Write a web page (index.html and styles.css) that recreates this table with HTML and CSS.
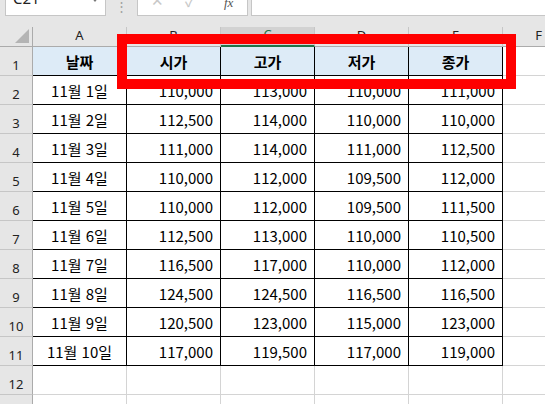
FILE: index.html
```html
<!DOCTYPE html>
<html lang="ko">
<head>
<meta charset="utf-8">
<link rel="stylesheet" href="styles.css">
</head>
<body>
<div class="page">
  <div class="fbar">
    <div class="namebox"><span class="nb-text">C21</span><span class="nb-arrow"></span></div>
    <div class="dots">⋮</div>
    <div class="btns"><span class="b-x">✕</span><span class="b-ok">✓</span><span class="b-fx">fx</span></div>
    <div class="finput"></div>
  </div>
  <div class="sheet">
    <div class="corner"><span class="tri"></span></div>
    <div class="ch">A</div><div class="ch">B</div><div class="ch sel">C</div><div class="ch">D</div><div class="ch">E</div><div class="ch">F</div>

    <div class="rh">1</div>
    <div class="c t hd">날짜</div><div class="c t hd">시가</div><div class="c t hd">고가</div><div class="c t hd">저가</div><div class="c t hd">종가</div><div class="c"></div>

    <div class="rh">2</div>
    <div class="c t ct">11월 1일</div><div class="c t n">110,000</div><div class="c t n">113,000</div><div class="c t n">110,000</div><div class="c t n">111,000</div><div class="c"></div>

    <div class="rh">3</div>
    <div class="c t ct">11월 2일</div><div class="c t n">112,500</div><div class="c t n">114,000</div><div class="c t n">110,000</div><div class="c t n">110,000</div><div class="c"></div>

    <div class="rh">4</div>
    <div class="c t ct">11월 3일</div><div class="c t n">111,000</div><div class="c t n">114,000</div><div class="c t n">111,000</div><div class="c t n">112,500</div><div class="c"></div>

    <div class="rh">5</div>
    <div class="c t ct">11월 4일</div><div class="c t n">110,000</div><div class="c t n">112,000</div><div class="c t n">109,500</div><div class="c t n">112,000</div><div class="c"></div>

    <div class="rh">6</div>
    <div class="c t ct">11월 5일</div><div class="c t n">110,000</div><div class="c t n">112,000</div><div class="c t n">109,500</div><div class="c t n">111,500</div><div class="c"></div>

    <div class="rh">7</div>
    <div class="c t ct">11월 6일</div><div class="c t n">112,500</div><div class="c t n">113,000</div><div class="c t n">110,000</div><div class="c t n">110,500</div><div class="c"></div>

    <div class="rh">8</div>
    <div class="c t ct">11월 7일</div><div class="c t n">116,500</div><div class="c t n">117,000</div><div class="c t n">110,000</div><div class="c t n">112,000</div><div class="c"></div>

    <div class="rh">9</div>
    <div class="c t ct">11월 8일</div><div class="c t n">124,500</div><div class="c t n">124,500</div><div class="c t n">116,500</div><div class="c t n">116,500</div><div class="c"></div>

    <div class="rh">10</div>
    <div class="c t ct">11월 9일</div><div class="c t n">120,500</div><div class="c t n">123,000</div><div class="c t n">115,000</div><div class="c t n">123,000</div><div class="c"></div>

    <div class="rh">11</div>
    <div class="c t ct">11월 10일</div><div class="c t n">117,000</div><div class="c t n">119,500</div><div class="c t n">117,000</div><div class="c t n">119,000</div><div class="c"></div>

    <div class="rh">12</div>
    <div class="c"></div><div class="c"></div><div class="c"></div><div class="c"></div><div class="c"></div><div class="c"></div>

    <div class="rh">13</div>
    <div class="c"></div><div class="c"></div><div class="c"></div><div class="c"></div><div class="c"></div><div class="c"></div>
  </div>
  <div class="redbox"></div>
</div>
</body>
</html>
```

FILE: styles.css
```css
* { box-sizing: border-box; }
html, body { margin: 0; padding: 0; }
body {
  width: 545px;
  height: 404px;
  overflow: hidden;
  background: #e6e6e6;
  font-family: "Noto Sans CJK KR", "Noto Sans", sans-serif;
  color: #000;
}
.page { position: relative; width: 545px; height: 404px; overflow: hidden; }

/* formula bar */
.fbar {
  display: flex;
  height: 27px;
  align-items: flex-start;
  background: #e6e6e6;
}
.namebox {
  position: relative;
  margin-left: 5px;
  width: 101px;
  height: 16px;
  background: #fff;
  border: 1px solid #c6c6c6;
  border-top: none;
  overflow: hidden;
}
.nb-text {
  position: absolute;
  left: 7px;
  top: -12px;
  font-family: "Noto Sans", sans-serif;
  font-size: 15px;
  line-height: 20px;
  color: #222;
}
.nb-arrow {
  position: absolute;
  right: 6px;
  top: -3px;
  border-left: 4px solid transparent;
  border-right: 4px solid transparent;
  border-top: 5px solid #777;
}
.dots {
  width: 31px;
  height: 16px;
  text-align: center;
  font-size: 13px;
  line-height: 12px;
  color: #a0a0a0;
  overflow: hidden;
}
.btns {
  display: flex;
  align-items: flex-start;
  width: 111px;
  height: 16px;
  background: #fff;
  border: 1px solid #c6c6c6;
  border-top: none;
  overflow: hidden;
  position: relative;
}
.btns span { position: absolute; top: -8px; line-height: 16px; }
.b-x { left: 13px; font-size: 15px; color: #c8c8c8; }
.b-ok { left: 47px; font-size: 16px; color: #c8c8c8; }
.b-fx { left: 86px; font-family: "Liberation Serif", serif; font-style: italic; font-size: 13px; color: #555; top: -5px !important; }
.finput {
  flex: 1;
  margin-left: 3px;
  height: 16px;
  background: #fff;
  border-bottom: 1px solid #c6c6c6;
  border-left: 1px solid #c6c6c6;
}

/* sheet */
.sheet {
  display: grid;
  grid-template-columns: 33px repeat(5, 94px) 72px;
  grid-template-rows: 20px;
  grid-auto-rows: 29px;
  background: #fff;
}
.corner {
  position: relative;
  background: #e6e6e6;
  border-right: 1px solid #ababab;
  border-bottom: 1px solid #ababab;
}
.tri {
  position: absolute;
  right: 3px;
  bottom: 3px;
  width: 0;
  height: 0;
  border-left: 14px solid transparent;
  border-bottom: 14px solid #b4b4b4;
}
.ch {
  display: flex;
  align-items: center;
  justify-content: center;
  padding-bottom: 4px;
  background: #e6e6e6;
  border-right: 1px solid #c6c6c6;
  border-bottom: 1px solid #ababab;
  font-family: "Noto Sans", sans-serif;
  font-size: 13px;
  color: #222;
}
.ch.sel {
  background: #d2d2d2;
  border-bottom: 2px solid #217346;
  color: #217346;
}
.rh {
  display: flex;
  align-items: center;
  justify-content: center;
  padding-top: 8px;
  background: #e6e6e6;
  border-right: 1px solid #ababab;
  border-bottom: 1px solid #c6c6c6;
  font-family: "Noto Sans", sans-serif;
  font-size: 13px;
  color: #222;
}
.c {
  display: flex;
  align-items: center;
  border-right: 1px solid #d4d4d4;
  border-bottom: 1px solid #d4d4d4;
  font-size: 15px;
  white-space: nowrap;
  padding-top: 1px;
}
.c.t {
  border-right-color: #000;
  border-bottom-color: #000;
}
.hd {
  justify-content: center;
  background: #ddebf7;
  font-weight: bold;
}
.ct { justify-content: center; }
.n { justify-content: flex-end; padding-right: 7px; }

/* overlay annotation */
.redbox {
  position: absolute;
  left: 117px;
  top: 34px;
  width: 399px;
  height: 55px;
  border: 10px solid #ff0000;
}
```
